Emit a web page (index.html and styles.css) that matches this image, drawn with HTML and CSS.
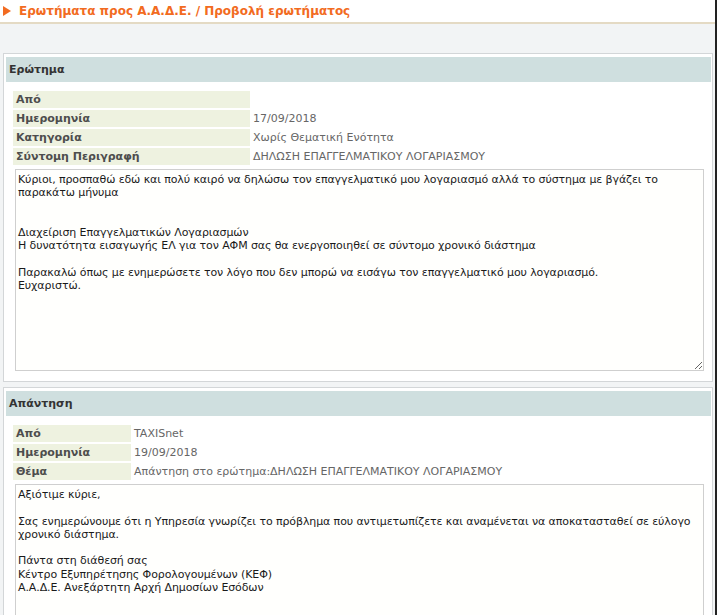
FILE: index.html
```html
<!DOCTYPE html>
<html lang="el">
<head>
  <meta charset="UTF-8" />
  <title>Προβολή ερωτήματος</title>
  <link rel="stylesheet" href="styles.css">
</head>
<body>

<div class="page">

  <!-- Title -->
  <div class="page-title">
    <span class="arrow"></span>
    <h1>Ερωτήματα προς Α.Α.Δ.Ε. / Προβολή ερωτήματος</h1>
  </div>

  <!-- Question -->
  <div class="panel panel-question">
    <div class="panel-head">Ερώτημα</div>
    <div class="panel-body">
      <div class="info info-wide">
        <div class="label">Από</div>
        <div class="value"></div>
        <div class="label">Ημερομηνία</div>
        <div class="value">17/09/2018</div>
        <div class="label">Κατηγορία</div>
        <div class="value">Χωρίς Θεματική Ενότητα</div>
        <div class="label">Σύντομη Περιγραφή</div>
        <div class="value">ΔΗΛΩΣΗ ΕΠΑΓΓΕΛΜΑΤΙΚΟΥ ΛΟΓΑΡΙΑΣΜΟΥ</div>
      </div>
      <textarea class="message" readonly>Κύριοι, προσπαθώ εδώ και πολύ καιρό να δηλώσω τον επαγγελματικό μου λογαριασμό αλλά το σύστημα με βγάζει το παρακάτω μήνυμα


Διαχείριση Επαγγελματικών Λογαριασμών
Η δυνατότητα εισαγωγής ΕΛ για τον ΑΦΜ σας θα ενεργοποιηθεί σε σύντομο χρονικό διάστημα

Παρακαλώ όπως με ενημερώσετε τον λόγο που δεν μπορώ να εισάγω τον επαγγελματικό μου λογαριασμό.
Ευχαριστώ.</textarea>
    </div>
  </div>

  <!-- Answer -->
  <div class="panel panel-answer">
    <div class="panel-head">Απάντηση</div>
    <div class="panel-body">
      <div class="info info-narrow">
        <div class="label">Από</div>
        <div class="value">TAXISnet</div>
        <div class="label">Ημερομηνία</div>
        <div class="value">19/09/2018</div>
        <div class="label">Θέμα</div>
        <div class="value">Απάντηση στο ερώτημα:ΔΗΛΩΣΗ ΕΠΑΓΓΕΛΜΑΤΙΚΟΥ ΛΟΓΑΡΙΑΣΜΟΥ</div>
      </div>
      <textarea class="message" readonly>Αξιότιμε κύριε,

Σας ενημερώνουμε ότι η Υπηρεσία γνωρίζει το πρόβλημα που αντιμετωπίζετε και αναμένεται να αποκατασταθεί σε εύλογο χρονικό διάστημα.

Πάντα στη διάθεσή σας
Κέντρο Εξυπηρέτησης Φορολογουμένων (ΚΕΦ)
Α.Α.Δ.Ε. Ανεξάρτητη Αρχή Δημοσίων Εσόδων</textarea>
    </div>
  </div>

</div>

</body>
</html>
```

FILE: styles.css
```css
html,
body {
  margin: 0;
  padding: 0;
  height: 100%;
  overflow: hidden;
}

body {
  font-family: "DejaVu Sans", Verdana, sans-serif;
  font-size: 11px;
  color: #222;
  background: #f2f4f5;
}

.page {
  width: 715px;
  min-height: 100%;
  border-right: 2px solid #222;
}

/* Title bar */
.page-title {
  display: flex;
  align-items: center;
  height: 22px;
  background: #fff;
  border-bottom: 2px solid #e4dac4;
}

.arrow {
  width: 0;
  height: 0;
  margin: 0 8px 0 3px;
  border-top: 5px solid transparent;
  border-bottom: 5px solid transparent;
  border-left: 8px solid #f26b21;
}

.page-title h1 {
  margin: 0 0 1px;
  font-size: 12px;
  font-weight: bold;
  color: #f26b21;
}

/* Panels */
.panel {
  margin: 0 2px 0 3px;
  padding: 3px 1px 10px 2px;
  background: #fff;
  border: 1px solid #d3d6d8;
}

.panel-question {
  margin-top: 29px;
}

.panel-answer {
  margin-top: 5px;
}

.panel-head {
  height: 25px;
  line-height: 25px;
  padding-left: 3px;
  background: #cfdfdf;
  font-weight: bold;
  font-size: 11px;
  color: #333;
}

.panel-body {
  padding: 9px 8px 0 7px;
}

.info {
  display: grid;
  row-gap: 2px;
  column-gap: 3px;
}

.info-wide {
  grid-template-columns: 237px 1fr;
}

.info-narrow {
  grid-template-columns: 118px 1fr;
}

.label,
.value {
  height: 17px;
  line-height: 17px;
  white-space: nowrap;
}

.label {
  padding-left: 3px;
  background: #eef2e0;
  font-weight: bold;
  color: #4d4d4d;
}

.value {
  color: #666;
}

.message {
  display: block;
  box-sizing: border-box;
  width: 689px;
  height: 202px;
  margin: 4px 0 0 2px;
  padding: 3px 2px;
  font-family: "DejaVu Sans", Verdana, sans-serif;
  font-size: 11px;
  line-height: 13.25px;
  letter-spacing: -0.1px;
  color: #1a1a1a;
  background: #fffffd;
  border: 1px solid #cfcfcf;
  outline: none;
}
```
